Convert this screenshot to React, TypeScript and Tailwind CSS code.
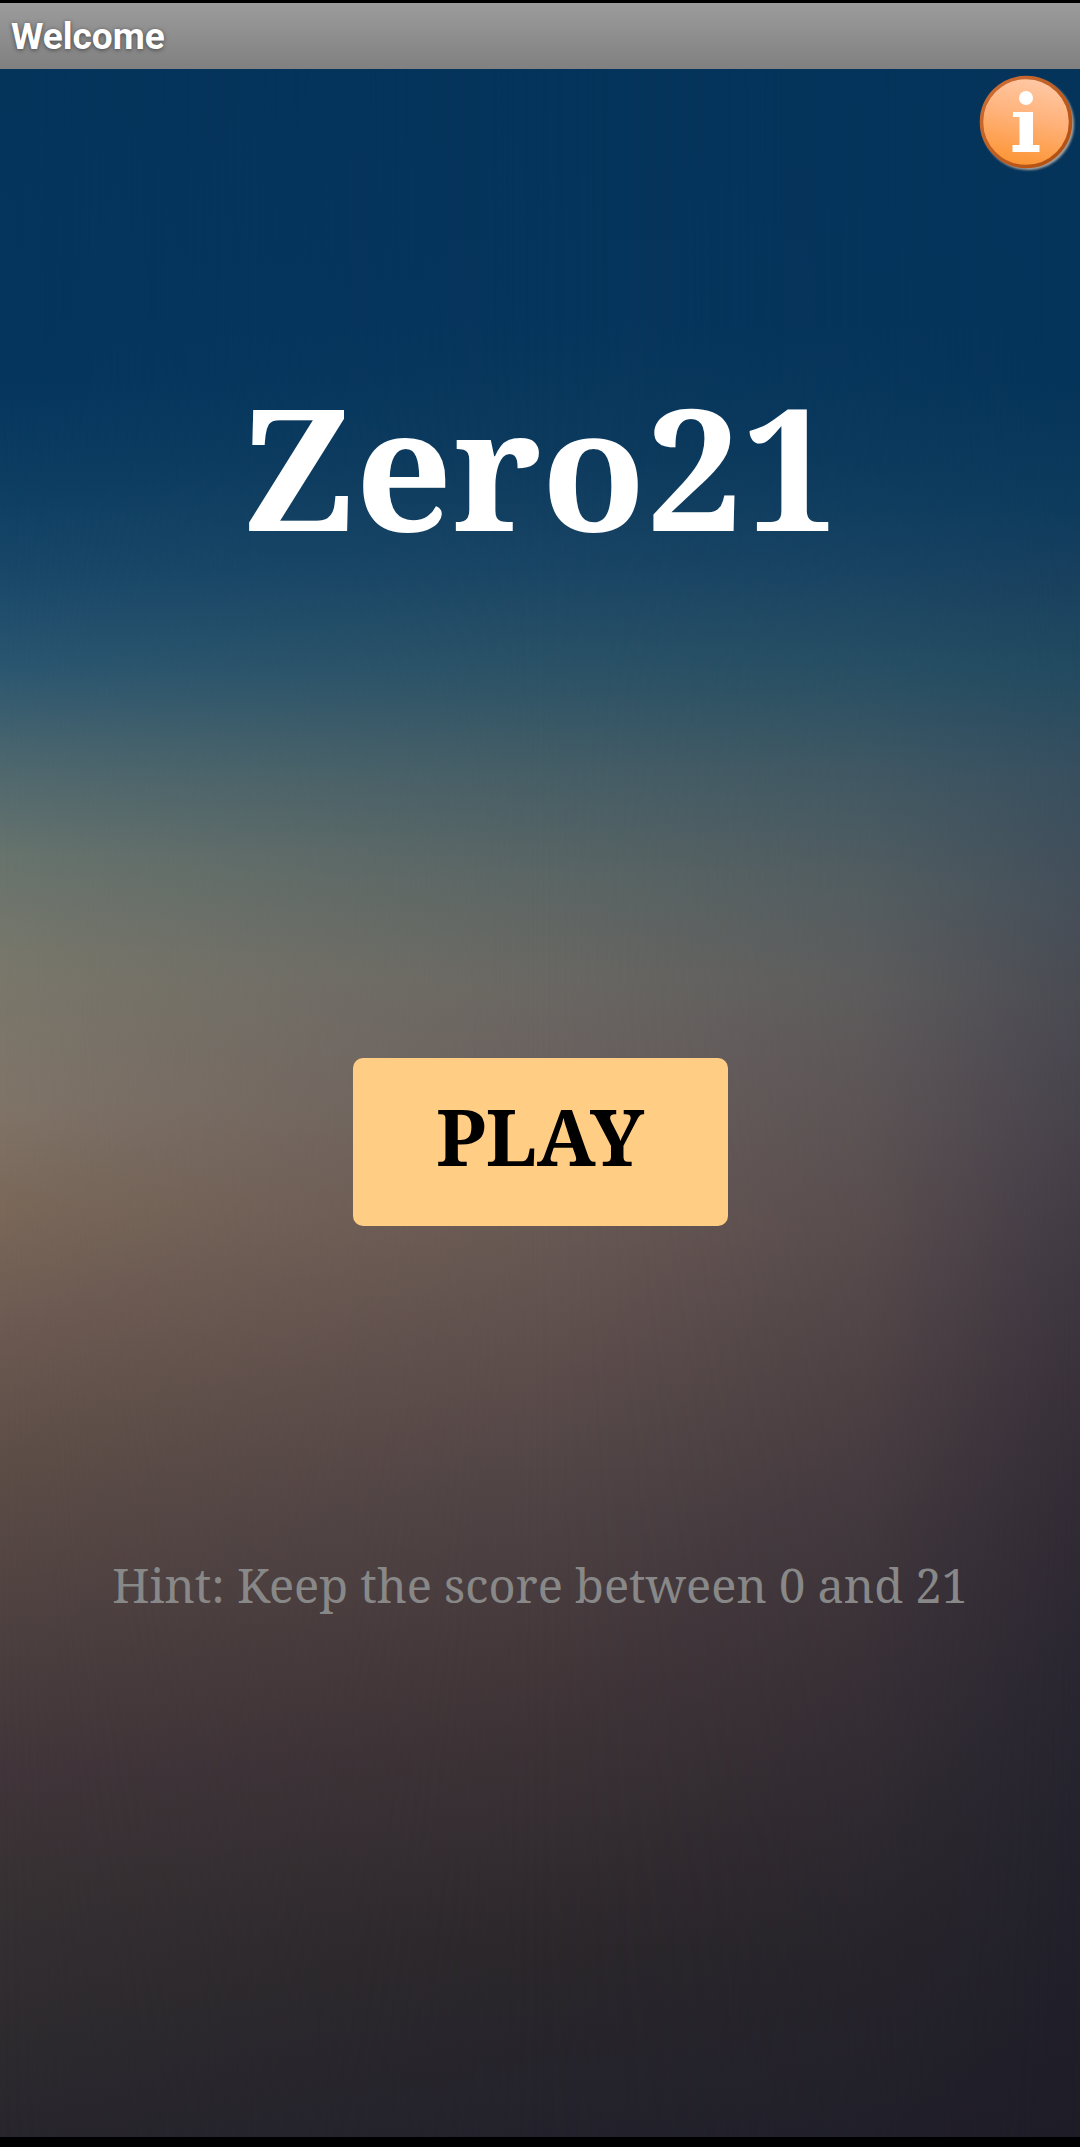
import React from "react";

function InfoIcon() {
  return (
    <svg viewBox="0 0 100 100" className="block h-full w-full" aria-hidden="true">
      <defs>
        <linearGradient id="info-face" x1="0.6" y1="0" x2="0.4" y2="1">
          <stop offset="0" stopColor="#ffc9a6" />
          <stop offset="0.45" stopColor="#ffb27a" />
          <stop offset="1" stopColor="#fc9432" />
        </linearGradient>
        <linearGradient id="info-rim" x1="0" y1="0" x2="1" y2="1">
          <stop offset="0" stopColor="#cc6f38" />
          <stop offset="1" stopColor="#b04d0c" />
        </linearGradient>
        <filter id="info-soft" x="-20%" y="-20%" width="140%" height="140%">
          <feGaussianBlur stdDeviation="1.2" />
        </filter>
      </defs>
      <circle cx="50" cy="49" r="46" fill="#a9a4a0" filter="url(#info-soft)" />
      <circle cx="48" cy="47" r="44.5" fill="url(#info-face)" stroke="url(#info-rim)" strokeWidth="3.5" />
      <circle cx="48" cy="23" r="7" fill="#fff" />
      <path d="M35 37H55V70H61.500V77H34.500V70H41.500V42H35Z" fill="#fff" />
    </svg>
  );
}

function Sky() {
  return (
    <div aria-hidden="true" className="absolute inset-0">
      <div className="absolute inset-0 bg-[linear-gradient(180deg,#05345b_0%,#06355c_12%,#0d3b5e_19%,#194565_24%,#2b5266_29%,#465e66_34%,#5b6665_39%,#6a6863_44%,#6b625f_48%,#695954_56%,#5c4d4b_63%,#4e4244_70%,#43373a_77%,#372f33_84%,#2b272b_91%,#23222c_100%)]" />
      <div className="absolute inset-0 bg-[linear-gradient(180deg,#05345b_0%,#05355d_15%,#0d3e62_20%,#174668_24%,#2b5670_29%,#49656e_33%,#67736d_38%,#78776b_43%,#807468_50%,#7a6859_55%,#6c5951_61%,#5d4e47_67%,#4e4140_75%,#41353a_82%,#353032_89%,#28262c_100%)] [mask-image:linear-gradient(90deg,#000_0%,#000c_8%,transparent_50%)]" />
      <div className="absolute inset-0 bg-[linear-gradient(180deg,#05345b_0%,#05345a_15%,#0d3b5d_21%,#173f5e_24%,#224a60_29%,#384f5f_34%,#454f59_40%,#4a4a52_45%,#47424b_51%,#403943_57%,#38303a_64%,#302a34_71%,#292631_78%,#23222c_86%,#1e1c27_100%)] [mask-image:linear-gradient(90deg,transparent_50%,#0006_80%,#000_100%)]" />
    </div>
  );
}

export default function App() {
  return (
    <div className="flex min-h-screen flex-col border-t-3 border-b-10 border-black bg-[#05345b]">
      <header className="flex h-[66px] items-center bg-linear-to-b from-[#9c9c9c] to-[#808080] px-[11px] pt-px">
        <p className="font-['Roboto',sans-serif] text-[37px] leading-none font-bold text-white [text-shadow:0_1px_4px_#444]">
          Welcome
        </p>
      </header>
      <main className="relative flex flex-1 flex-col font-['Noto_Serif','DejaVu_Serif',serif]">
        <Sky />
        <div className="relative flex flex-1 flex-col items-center">
          <button type="button" aria-label="Information" className="mt-1.5 mr-0.5 size-[100px] self-end">
            <InfoIcon />
          </button>
          <h1 className="mt-[174px] text-[170px] leading-[232px] font-bold text-white">Zero21</h1>
          <button
            type="button"
            className="mt-[477px] h-[168px] w-[375px] rounded-[10px] bg-[#ffcd84] pb-3 text-[78px] leading-none font-bold text-black"
          >
            PLAY
          </button>
          <p className="mt-[326px] text-center text-[47px] leading-[66px] text-[#888888]">
            Hint: Keep the score between 0 and 21
          </p>
        </div>
      </main>
    </div>
  );
}
